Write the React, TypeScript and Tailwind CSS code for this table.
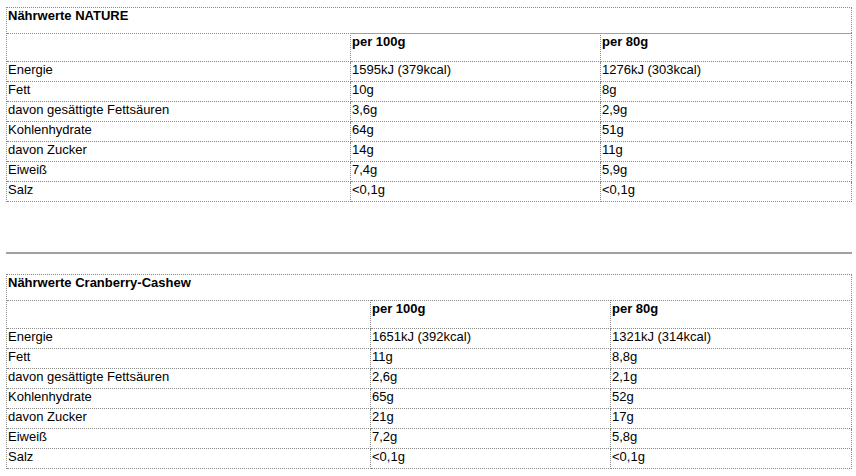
import React from "react";

interface Row {
  label: string;
  per100: string;
  per80: string;
}

interface TableProps {
  title: string;
  gridCols: string;
  rows: Row[];
  solidHeadTop?: boolean;
}

const nature: Row[] = [
  { label: "Energie", per100: "1595kJ (379kcal)", per80: "1276kJ (303kcal)" },
  { label: "Fett", per100: "10g", per80: "8g" },
  { label: "davon gesättigte Fettsäuren", per100: "3,6g", per80: "2,9g" },
  { label: "Kohlenhydrate", per100: "64g", per80: "51g" },
  { label: "davon Zucker", per100: "14g", per80: "11g" },
  { label: "Eiweiß", per100: "7,4g", per80: "5,9g" },
  { label: "Salz", per100: "<0,1g", per80: "<0,1g" },
];

const cranberry: Row[] = [
  { label: "Energie", per100: "1651kJ (392kcal)", per80: "1321kJ (314kcal)" },
  { label: "Fett", per100: "11g", per80: "8,8g" },
  { label: "davon gesättigte Fettsäuren", per100: "2,6g", per80: "2,1g" },
  { label: "Kohlenhydrate", per100: "65g", per80: "52g" },
  { label: "davon Zucker", per100: "21g", per80: "17g" },
  { label: "Eiweiß", per100: "7,2g", per80: "5,8g" },
  { label: "Salz", per100: "<0,1g", per80: "<0,1g" },
];

const cell = "border-r border-b border-dotted border-[#8a8a8a] pl-px";

const NutritionTable = ({ title, gridCols, rows, solidHeadTop }: TableProps) => {
  return (
    <div
      className={`grid w-[846px] border-l border-t border-dotted border-[#8a8a8a] ${gridCols}`}
    >
      {/* Title */}
      <div className="col-span-3 h-[25px] border-r border-dotted border-[#8a8a8a] pl-px font-bold">
        {title}
      </div>

      {/* Header */}
      <div className={`${cell} h-[29px] border-t`}></div>
      {["per 100g", "per 80g"].map((h) =>
        solidHeadTop ? (
          <div key={h} className={`${cell} h-[29px] !pl-0 font-bold`}>
            <div className="-ml-px h-px bg-[#a0a0a0]" />
            <div className="pl-px">{h}</div>
          </div>
        ) : (
          <div key={h} className={`${cell} h-[29px] border-t font-bold`}>
            {h}
          </div>
        )
      )}

      {rows.map((r) => (
        <React.Fragment key={r.label}>
          <div className={`${cell} h-[20px]`}>{r.label}</div>
          <div className={`${cell} h-[20px]`}>{r.per100}</div>
          <div className={`${cell} h-[20px]`}>{r.per80}</div>
        </React.Fragment>
      ))}
    </div>
  );
};

export default function App() {
  return (
    <div
      className="min-h-[476px] w-[856px] bg-white pl-[6px] pt-[7px] text-[13px] leading-[15px] text-black"
      style={{ fontFamily: '"Liberation Sans", Arial, sans-serif' }}
    >
      <NutritionTable
        title="Nährwerte NATURE"
        gridCols="grid-cols-[344px_250px_251px]"
        rows={nature}
        solidHeadTop
      />
      <div className="mt-[50px] h-[2px] w-[846px] bg-[#a0a0a0]" />
      <div className="mt-[20px]">
        <NutritionTable
          title="Nährwerte Cranberry-Cashew"
          gridCols="grid-cols-[364px_240px_241px]"
          rows={cranberry}
        />
      </div>
    </div>
  );
}
